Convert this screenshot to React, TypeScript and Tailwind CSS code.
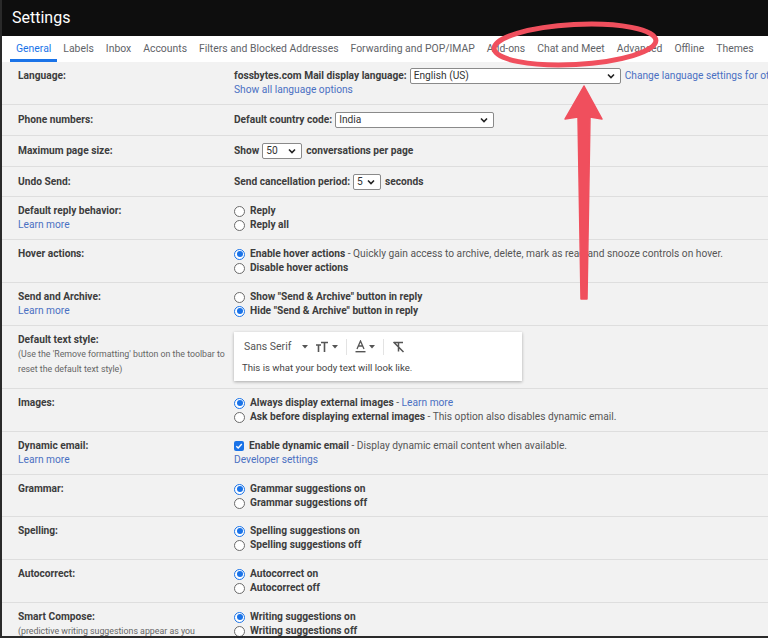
import React from 'react';

const tabs = ['General', 'Labels', 'Inbox', 'Accounts', 'Filters and Blocked Addresses', 'Forwarding and POP/IMAP', 'Add-ons', 'Chat and Meet', 'Advanced', 'Offline', 'Themes'];

function Chevron() {
  return (
    <svg width="8" height="6" viewBox="0 0 8 6" className="shrink-0">
      <path d="M1 1.5 L4 4.5 L7 1.5" fill="none" stroke="#222" strokeWidth="1.6" />
    </svg>
  );
}

function Select({ value, w }: { value: string; w: string }) {
  return (
    <span className={`inline-flex h-[16px] items-center justify-between rounded-[2px] border border-[#8a8a8a] bg-white pl-[3px] pr-[5px] align-middle font-normal text-[#333] ${w}`}>
      <span>{value}</span>
      <Chevron />
    </span>
  );
}

function Radio({ on }: { on?: boolean }) {
  return (
    <span className={`mr-[5px] inline-flex h-[11px] w-[11px] shrink-0 items-center justify-center rounded-full border ${on ? 'border-[#1a73e8] bg-white' : 'border-[#6b6b6b] bg-white'}`}>
      {on && <span className="h-[6px] w-[6px] rounded-full bg-[#1a73e8]" />}
    </span>
  );
}

function Opt({ on, children }: { on?: boolean; children: React.ReactNode }) {
  return (
    <div className="flex h-[14px] items-center">
      <Radio on={on} />
      <span>{children}</span>
    </div>
  );
}

function Row({ label, children, pad = 'py-[7px]' }: { label: React.ReactNode; children: React.ReactNode; pad?: string }) {
  return (
    <div className={`flex border-b border-[#dedede] ${pad}`}>
      <div className="w-[232px] shrink-0 pl-[16px] pr-2">{label}</div>
      <div className="flex-1 whitespace-nowrap">{children}</div>
    </div>
  );
}

const L = ({ children }: { children: React.ReactNode }) => <div className="font-bold text-[#3d3d3d]">{children}</div>;
const More = () => <div className="text-[#4a70c2]">Learn more</div>;

export default function App() {
  return (
    <div className="relative h-[638px] w-[768px] overflow-hidden border-b-2 border-l-2 border-[#2a2a2a] bg-[#f2f2f2] font-['Roboto',sans-serif] text-[10.2px] leading-[14px] text-[#555]">
      {/* header */}
      <div className="flex h-[36px] items-center bg-[#0e0e0e] pl-[10px] text-[16px] text-white">Settings</div>

      {/* tabs */}
      <div className="flex h-[26px] bg-white pl-[8px] text-[10.4px] text-[#5f6368]">
        {tabs.map((t, i) => (
          <div
            key={t}
            className={`flex items-center whitespace-nowrap px-[6px] ${i === 0 ? 'border-b-[3px] border-[#1a73e8] pt-[3px] text-[#1a73e8]' : ''}`}
          >
            {t}
          </div>
        ))}
      </div>

      {/* rows */}
      <Row label={<L>Language:</L>}>
        <div className="flex h-[14px] items-center">
          <span className="mr-[3px] font-bold text-[#3d3d3d]">fossbytes.com Mail display language:</span>
          <Select value="English (US)" w="w-[211px]" />
          <span className="ml-[4px] text-[#4a70c2]">Change language settings for other Google products</span>
        </div>
        <div className="text-[#4a70c2]">Show all language options</div>
      </Row>

      <Row pad="py-[8px]" label={<L>Phone numbers:</L>}>
        <div className="flex h-[14px] items-center font-bold text-[#3d3d3d]">
          <span className="mr-[3px]">Default country code:</span>
          <Select value="India" w="w-[159px]" />
        </div>
      </Row>

      <Row pad="py-[8px]" label={<L>Maximum page size:</L>}>
        <div className="flex h-[14px] items-center font-bold text-[#3d3d3d]">
          <span className="mr-[3px]">Show</span>
          <Select value="50" w="w-[40px]" />
          <span className="ml-[4px]">conversations per page</span>
        </div>
      </Row>

      <Row pad="pt-[8px] pb-[7px]" label={<L>Undo Send:</L>}>
        <div className="flex h-[14px] items-center font-bold text-[#3d3d3d]">
          <span className="mr-[3px]">Send cancellation period:</span>
          <Select value="5" w="w-[28px]" />
          <span className="ml-[4px]">seconds</span>
        </div>
      </Row>

      <Row label={<><L>Default reply behavior:</L><More /></>}>
        <div className="font-bold text-[#3d3d3d]">
          <Opt>Reply</Opt>
          <Opt>Reply all</Opt>
        </div>
      </Row>

      <Row label={<L>Hover actions:</L>}>
        <Opt on>
          <b className="text-[#3d3d3d]">Enable hover actions</b> - Quickly gain access to archive, delete, mark as read and snooze controls on hover.
        </Opt>
        <Opt>
          <b className="text-[#3d3d3d]">Disable hover actions</b>
        </Opt>
      </Row>

      <Row label={<><L>Send and Archive:</L><More /></>}>
        <div className="font-bold text-[#3d3d3d]">
          <Opt>Show "Send &amp; Archive" button in reply</Opt>
          <Opt on>Hide "Send &amp; Archive" button in reply</Opt>
        </div>
      </Row>

      <div className="flex border-b border-[#dedede] pb-[7px] pt-[6px]">
        <div className="w-[232px] shrink-0 pl-[16px] pt-[1px]">
          <L>Default text style:</L>
          <div className="whitespace-nowrap text-[8.8px] leading-[14.5px] text-[#666]">
            (Use the 'Remove formatting' button on the toolbar to
            <br />
            reset the default text style)
          </div>
        </div>
        <div className="h-[49px] w-[288px] bg-white shadow-[0_1px_3px_rgba(0,0,0,0.3)]">
          <div className="flex h-[29px] items-center pl-[10px] text-[#555]">
            <span className="text-[10.5px]">Sans Serif</span>
            <svg width="6" height="4" viewBox="0 0 6 4" className="ml-[11px]"><path d="M0 0h6L3 3.5z" fill="#555" /></svg>
            <svg width="14" height="12" viewBox="0 0 14 12" className="ml-[7px]">
              <path d="M1 4h5M3.5 4v7M6 1.5h7M9.5 1.5v9.5" fill="none" stroke="#555" strokeWidth="1.6" />
            </svg>
            <svg width="6" height="4" viewBox="0 0 6 4" className="ml-[3px]"><path d="M0 0h6L3 3.5z" fill="#555" /></svg>
            <span className="mx-[8px] h-[16px] w-px bg-[#e3e3e3]" />
            <svg width="11" height="13" viewBox="0 0 11 13">
              <path d="M2 9 L5.5 1 L9 9 M3.3 6h4.4" fill="none" stroke="#555" strokeWidth="1.3" />
              <rect x="0.5" y="11" width="10" height="1.4" fill="#555" />
            </svg>
            <svg width="6" height="4" viewBox="0 0 6 4" className="ml-[3px]"><path d="M0 0h6L3 3.5z" fill="#555" /></svg>
            <span className="mx-[8px] h-[16px] w-px bg-[#e3e3e3]" />
            <svg width="13" height="12" viewBox="0 0 13 12">
              <path d="M2 1.5h9M6.5 1.5v9M1.5 1l10 10" fill="none" stroke="#555" strokeWidth="1.5" />
            </svg>
          </div>
          <div className="pl-[8px] text-[9.6px] text-[#444]">This is what your body text will look like.</div>
        </div>
      </div>

      <Row label={<L>Images:</L>}>
        <Opt on>
          <b className="text-[#3d3d3d]">Always display external images</b> - <span className="text-[#4a70c2]">Learn more</span>
        </Opt>
        <Opt>
          <b className="text-[#3d3d3d]">Ask before displaying external images</b> - This option also disables dynamic email.
        </Opt>
      </Row>

      <Row label={<><L>Dynamic email:</L><More /></>}>
        <div className="flex h-[14px] items-center">
          <span className="mr-[5px] inline-flex h-[10px] w-[10px] items-center justify-center rounded-[2px] bg-[#1a73e8]">
            <svg width="8" height="8" viewBox="0 0 8 8"><path d="M1.3 4.2 L3.2 6 L6.8 2" fill="none" stroke="#fff" strokeWidth="1.4" /></svg>
          </span>
          <span>
            <b className="text-[#3d3d3d]">Enable dynamic email</b> - Display dynamic email content when available.
          </span>
        </div>
        <div className="text-[#4a70c2]">Developer settings</div>
      </Row>

      <Row pad="pt-[7px] pb-[6px]" label={<L>Grammar:</L>}>
        <div className="font-bold text-[#3d3d3d]">
          <Opt on>Grammar suggestions on</Opt>
          <Opt>Grammar suggestions off</Opt>
        </div>
      </Row>

      <Row label={<L>Spelling:</L>}>
        <div className="font-bold text-[#3d3d3d]">
          <Opt on>Spelling suggestions on</Opt>
          <Opt>Spelling suggestions off</Opt>
        </div>
      </Row>

      <Row label={<L>Autocorrect:</L>}>
        <div className="font-bold text-[#3d3d3d]">
          <Opt on>Autocorrect on</Opt>
          <Opt>Autocorrect off</Opt>
        </div>
      </Row>

      <Row
        label={
          <>
            <L>Smart Compose:</L>
            <div className="whitespace-nowrap text-[8.8px] text-[#666]">
              (predictive writing suggestions appear as you
              <br />
              type)
            </div>
          </>
        }
      >
        <div className="font-bold text-[#3d3d3d]">
          <Opt on>Writing suggestions on</Opt>
          <Opt>Writing suggestions off</Opt>
        </div>
      </Row>

      {/* red annotation */}
      <svg className="pointer-events-none absolute left-0 top-0" width="768" height="638" viewBox="0 0 768 638">
        <ellipse cx="573" cy="44.5" rx="81" ry="20" transform="rotate(-3 573 44.5)" fill="none" stroke="#f04f5d" strokeWidth="5" />
        <path d="M582 86 L600 119 L588 117 L585 299 L579 299 L576 117 L563 119 Z" fill="#f04f5d" strokeLinejoin="round" stroke="#f04f5d" strokeWidth="1.5" />
      </svg>
    </div>
  );
}
